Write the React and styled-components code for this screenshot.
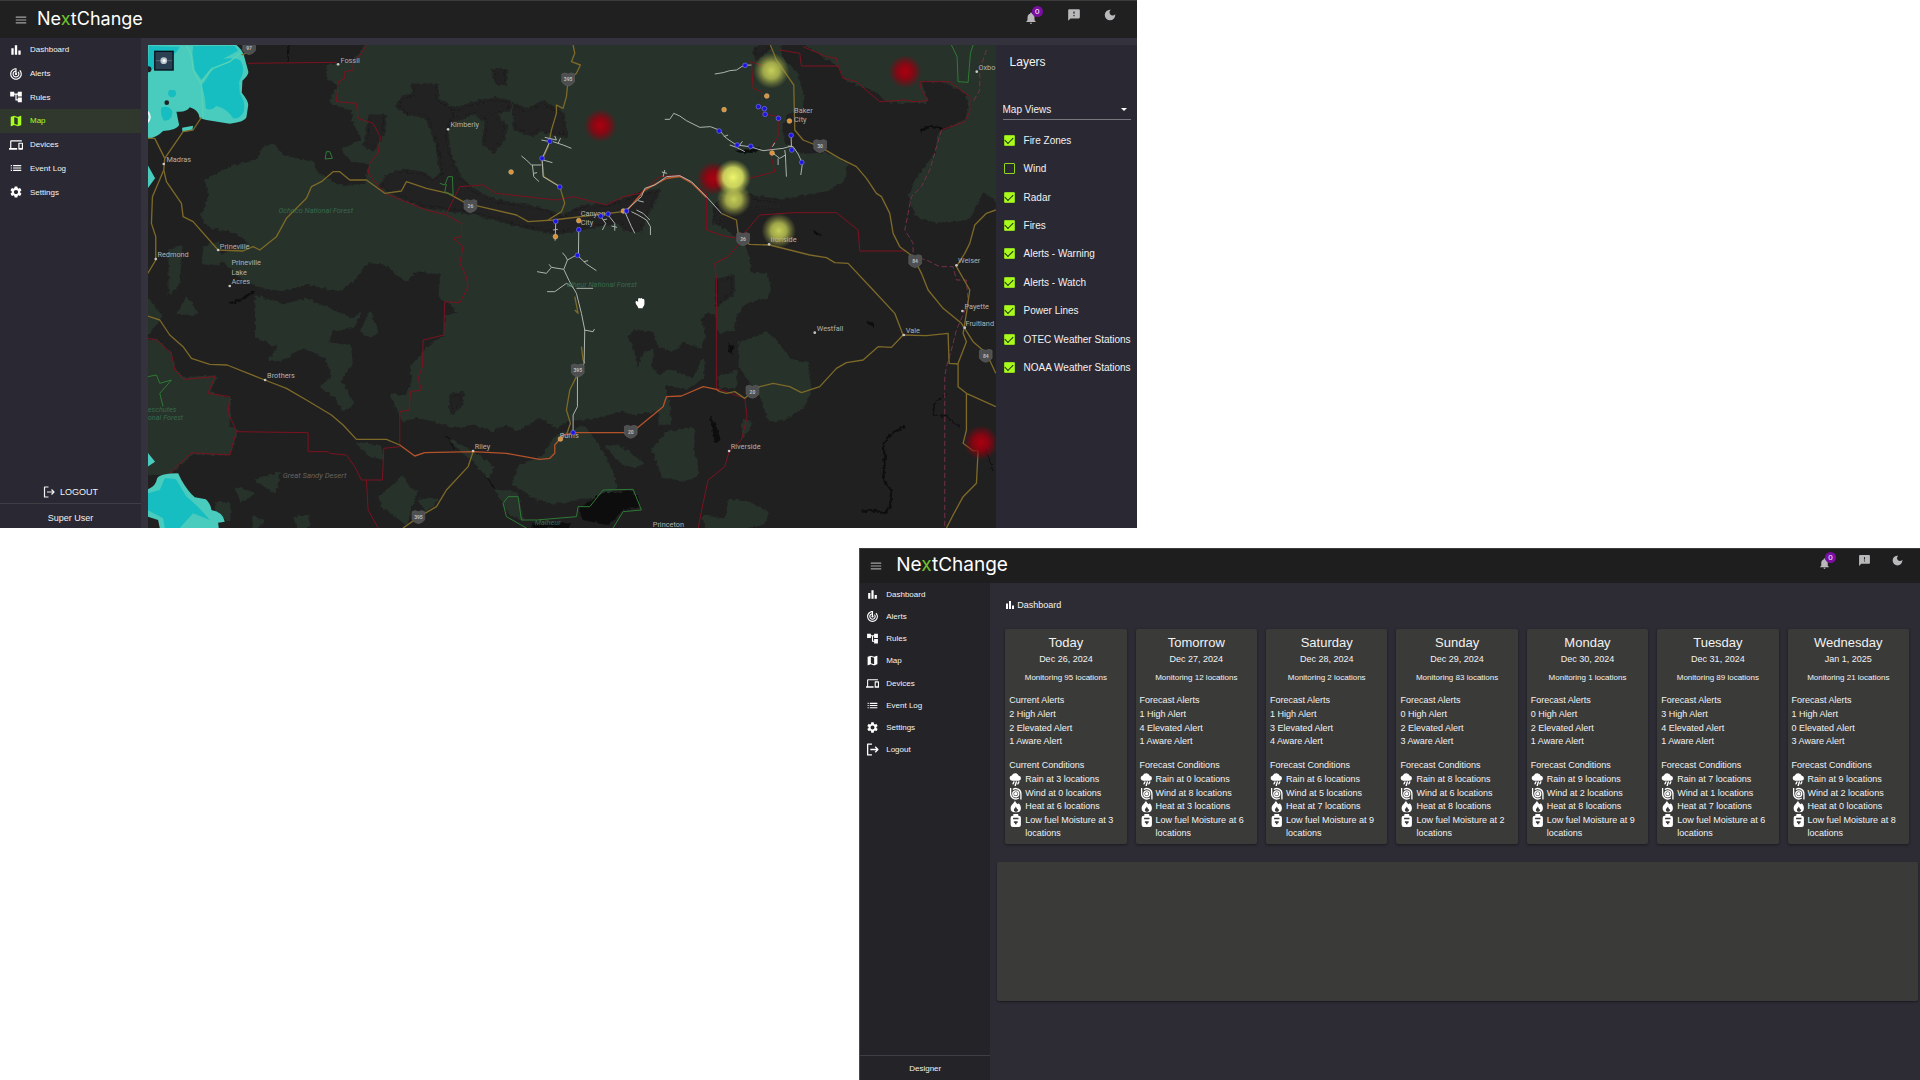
import React, { useState } from "react";
import styled, { createGlobalStyle } from "styled-components";
import {
  MdMenu, MdBarChart, MdTrackChanges, MdAccountTree, MdMap, MdDevices, MdList,
  MdSettings, MdNotifications, MdFeedback, MdDarkMode,
} from "react-icons/md";

const GlobalStyle = createGlobalStyle`
  * { box-sizing: border-box; }
  body {
    margin: 0;
    background: #fff;
    font-family: "Liberation Sans", Arial, Helvetica, sans-serif;
    color: #f2f2f2;
  }
  button, select, input { font: inherit; color: inherit; }
  ul, ol { list-style: none; margin: 0; padding: 0; }
  h2, h3, p { margin: 0; font-weight: 400; }
`;

/* ---------- shared shell ---------- */

const Showcase = styled.div`
  display: grid;
  grid-template-rows: 528fr 532fr;
  gap: 20px;
  min-height: 100vh;
`;

const Window = styled.section`
  display: flex;
  flex-direction: column;
  width: ${(p) => p.$width};
  justify-self: ${(p) => p.$side};
  background: ${(p) => p.$bg};
  border-top: 1px solid #3b3b3b;
  border-left: ${(p) => (p.$outlined ? "1px solid #4a4a4c" : "0")};
  min-height: 0;
`;

const Header = styled.header`
  display: flex;
  align-items: center;
  gap: ${(p) => p.$gap}px;
  height: ${(p) => p.$height}px;
  padding: 0 ${(p) => p.$right}px 0 ${(p) => p.$left}px;
  background: ${(p) => p.$bg};
`;

const IconButton = styled.button`
  position: relative;
  display: flex;
  padding: ${(p) => (p.$badged ? "5px 7px 0 0" : "0")};
  border: 0;
  background: none;
  color: ${(p) => p.$color || "#b9b9bb"};
  font-size: ${(p) => p.$size}px;
  cursor: pointer;
`;

const Badge = styled.span`
  position: absolute;
  top: 0;
  right: 2px;
  width: 11px;
  height: 11px;
  border-radius: 50%;
  background: #7b0fa3;
  color: #fff;
  font-size: 8px;
  line-height: 11px;
  text-align: center;
`;

const Logo = styled.span`
  flex: 1;
  padding-bottom: 2px;
  font-family: Inter, "Open Sans", sans-serif;
  font-size: ${(p) => p.$size}px;
  line-height: 24px;
  color: #fff;
  em { font-style: normal; color: #6fc22c; }
`;

const Actions = styled.div`
  display: flex;
  align-items: flex-start;
  align-self: flex-start;
  gap: ${(p) => p.$gap}px;
  padding-top: ${(p) => p.$top}px;
  > button + button { padding-top: 2px; }
`;

const Body = styled.div`
  flex: 1;
  display: flex;
  min-height: 0;
`;

const Sidebar = styled.aside`
  display: flex;
  flex-direction: column;
  flex: 0 0 ${(p) => p.$width}px;
  background: ${(p) => p.$bg};
`;

const NavList = styled.ul`
  display: grid;
  grid-auto-rows: 1fr;
  height: ${(p) => p.$height}px;
  margin-bottom: auto;
`;

const NavLink = styled.a`
  display: flex;
  align-items: center;
  gap: 7px;
  height: 100%;
  padding-left: ${(p) => p.$pad}px;
  background: ${(p) => (p.$active ? "#30382e" : "transparent")};
  color: ${(p) => (p.$active ? "#a6ff1f" : "#f4f4f4")};
  font-size: 8px;
  text-decoration: none;
  svg { width: ${(p) => p.$icon}px; height: ${(p) => p.$icon}px; color: ${(p) => (p.$active ? "#a6ff1f" : "#fff")}; }
`;

const LogoutButton = styled.button`
  display: flex;
  align-items: center;
  justify-content: center;
  gap: 5px;
  height: 23px;
  padding: 0;
  border: 0;
  background: none;
  font-size: 9px;
  cursor: pointer;
  svg { width: 12px; height: 12px; }
`;

const UserName = styled.p`
  height: ${(p) => p.$height}px;
  border-top: 1px solid #3f3e47;
  font-size: ${(p) => p.$size}px;
  line-height: ${(p) => p.$line}px;
  text-align: center;
`;

const LogoutIcon = () => (
  <svg viewBox="0 0 24 24" fill="none" stroke="currentColor" strokeWidth="2.4" strokeLinejoin="round" aria-hidden="true">
    <path d="M11 2H3v20h8M8 12h14M17 7l5 5-5 5" />
  </svg>
);

const navItems = [
  ["Dashboard", MdBarChart],
  ["Alerts", MdTrackChanges],
  ["Rules", MdAccountTree],
  ["Map", MdMap],
  ["Devices", MdDevices],
  ["Event Log", MdList],
  ["Settings", MdSettings],
];

function Nav({ items, active, height, pad, icon }) {
  return (
    <NavList $height={height}>
      {items.map(([label, Icon]) => (
        <li key={label}>
          <NavLink href="#" $active={label === active} $pad={pad} $icon={icon}>
            <Icon aria-hidden="true" />
            {label}
          </NavLink>
        </li>
      ))}
    </NavList>
  );
}

function TopBar({ bg, height, left, right, gap, actionGap, actionTop, size, logo }) {
  return (
    <Header $bg={bg} $height={height} $left={left} $right={right} $gap={gap}>
      <IconButton $size={14} $color="#a2a2a4" aria-label="Menu"><MdMenu /></IconButton>
      <Logo $size={logo}>Ne<em>x</em>tChange</Logo>
      <Actions $gap={actionGap} $top={actionTop}>
        <IconButton $size={size} $badged aria-label="Notifications"><MdNotifications /><Badge>0</Badge></IconButton>
        <IconButton $size={size} aria-label="Feedback"><MdFeedback /></IconButton>
        <IconButton $size={size} aria-label="Dark mode"><MdDarkMode /></IconButton>
      </Actions>
    </Header>
  );
}

/* ---------- map ---------- */

const MapArea = styled.main`
  flex: 1;
  display: flex;
  min-width: 0;
  padding: 7px 0 0 7px;
  background: #33323d;
`;

const MapCanvas = styled.svg`
  flex: 1;
  min-width: 0;
  width: 100%;
  height: 100%;
  background: #202020;
  font-family: Roboto, sans-serif;
`;

const FOREST = [
  "M680,45 L1920,45 1925,90 1970,130 1990,200 1985,235 1940,250 1925,290 1930,340 1985,375 2060,372 2120,400 2110,450 2060,480 1980,495 1920,505 1840,490 1780,475 1740,500 1715,530 1715,580 1760,605 1810,640 1830,700 1825,730 1880,735 1890,780 1880,800 1820,815 1790,850 1780,900 1740,905 1730,850 1700,845 1680,870 1695,920 1680,950 1630,930 1600,960 1560,950 1540,900 1480,895 1460,920 1480,960 1490,1030 1512,975 1540,960 1530,1010 1560,1040 1590,1020 1660,1050 1690,990 1690,1040 1640,1075 1570,1060 1585,1110 1590,1180 1560,1180 1560,1140 1480,1150 1440,1140 1380,1160 1280,1170 1250,1190 1200,1160 1130,1200 1100,1180 1060,1200 1000,1180 940,1190 880,1170 830,1160 790,1170 755,1095 800,1100 820,1050 815,1010 870,950 915,920 920,860 960,850 930,820 900,800 905,730 870,725 830,720 800,750 780,740 740,700 680,695 640,750 600,780 500,760 430,780 360,770 300,740 260,700 240,680 330,640 290,605 210,590 185,560 210,500 200,450 280,410 350,395 370,355 400,345 430,380 520,400 530,430 600,470 680,465 690,400 640,390 610,360 670,330 640,270 640,240 570,215 600,165 565,145 565,105 640,100Z",
  "M350,800 L430,825 500,810 560,835 640,870 660,850 640,890 580,900 560,940 630,950 635,1000 600,1050 640,1120 610,1140 590,1100 545,1070 580,1040 560,980 490,950 420,990 390,990 420,950 350,920Z",
  "M690,850 L715,905 690,915 665,905Z M140,805 L172,850 115,850Z M24,810 L65,860 24,910Z",
  "M24,930 L50,930 90,970 105,1020 130,1045 230,1040 205,1085 270,1110 265,1190 290,1200 270,1270 155,1270 90,1330 24,1330Z",
  "M90,660 L125,650 115,760 90,790Z M195,650 L235,640 240,700 190,700Z M450,450 L520,440 480,470Z",
  "M350,1350 L418,1330 405,1385Z M290,1375 L340,1390 305,1412Z M720,1400 L760,1370 790,1340 805,1375 830,1385 810,1440 800,1480 730,1430Z M230,1420 L268,1420 268,1470 230,1450Z M465,1465 L505,1460 505,1490 475,1490Z M340,1460 L370,1475 345,1494Z M655,1240 L720,1250 730,1285 690,1275Z M840,1410 L890,1410 860,1440Z",
  "M1800,940 L1840,925 1880,910 1905,930 1950,990 2000,1000 2012,1080 1990,1130 1930,1170 1890,1170 1860,1090 1800,1010Z",
  "M1580,1210 L1660,1195 1660,1260 1675,1330 1640,1350 1570,1340 1540,1260Z M1400,1250 L1440,1250 1508,1300 1490,1310 1450,1300Z M1740,1040 L1790,1025 1785,1070 1740,1070Z M1810,1170 L1835,1180 1810,1220Z",
  "M1770,1410 L1830,1420 1885,1450 1870,1480 1800,1494 1700,1494 1690,1460 1760,1470Z",
  "M1250,1220 L1330,1190 1370,1240 1400,1290 1430,1370 1390,1400 1350,1400 1240,1420 1180,1400 1120,1360 1140,1310 1210,1280Z M930,1230 L1000,1270 1060,1310 1045,1340 1000,1290Z M1070,1380 L1130,1390 1150,1470 1110,1450Z",
  "M2000,45 L2568,45 2568,510 2530,480 2490,560 2460,570 2390,575 2330,555 2310,500 2330,450 2390,370 2400,310 2480,270 2490,230 2480,190 2420,155 2340,150 2360,215 2240,215 2210,180 2120,150 2100,110 2070,90Z",
];

const CLEARINGS = [
  "M770,230 L790,200 820,195 820,165 890,165 895,210 940,235 945,265 920,300 930,370 960,440 1000,480 1060,510 1200,535 1270,560 1320,530 1400,525 1450,510 1500,490 1560,480 1520,560 1500,605 1455,600 1440,575 1250,610 1150,590 1000,550 850,530 760,490 720,470 740,440 790,420 850,430 880,450 905,430 890,340 860,260 800,250Z",
  "M940,240 L1000,220 1060,205 1110,215 1110,240 1060,250 1100,290 1090,330 1060,365 1030,340 1040,270 1000,250 950,270Z",
  "M1120,220 L1160,240 1210,215 1270,250 1280,320 1200,300 1180,315 1125,300Z",
  "M1060,120 L1098,120 1098,165 1070,160Z M690,258 L735,258 735,300 700,360 675,345Z",
  "M1850,90 L1842,60 1860,48 1895,50 1870,70Z M1720,580 L1800,540 1920,530 1890,510 1800,500 1740,520Z",
  "M935,1095 L968,1090 965,1120 940,1150 930,1130Z M1730,750 L1780,740 1780,790 1730,830Z",
];

const ROADS = [
  "M24,325 L45,325 75,385 72,420 80,455 125,520 130,560 160,575 235,660 310,663 340,650 360,660 410,620 440,565 500,505 515,470 545,455 580,425 600,425 630,450 680,450 735,490 785,483 800,455 860,475 925,490 980,520 1130,555 1165,575 1240,570 1450,545",
  "M185,262 L160,300 130,305 75,385 M72,420 L38,500 35,580 48,620 48,690 24,730 M330,65 L305,75",
  "M1300,45 L1305,70 1295,95 1322,105 1310,130 1285,150 1280,200 1270,235 1250,225 1250,250 1235,300 1225,350 1207,390 1212,440 1260,470 1275,520 1265,545 1225,570",
  "M1892,45 L1910,90 1962,165 1965,300 1990,330 2040,350 2100,385 2150,410 2180,445 2210,490 2225,500 2250,550 2260,610 2280,650 2320,680 2345,730 2365,780 2410,835 2465,880 2500,935 2540,970 2568,1030",
  "M1745,550 L1790,570 1797,625 1830,643 1890,645 2010,675 2060,683 2085,698 2125,700 2200,780 2265,850 2290,915 2255,952 2215,950 2170,990 2120,998 2090,1015 2040,1070 1985,1088 1950,1070 1900,1060 1860,1070 1838,1085 1815,1105 1785,1085 1760,1090 1740,1085",
  "M2568,540 L2540,550 2505,585 2490,640 2475,670 2450,710 2490,780 2480,850 2470,910 2480,935 2455,1000 2455,1070 2480,1090 2568,1130 M2290,915 L2360,917 2425,910 2428,1000 2455,1002 M2480,1090 L2480,1200 2470,1240 2500,1262 2515,1262 2510,1360 2470,1400 2440,1455 2420,1494",
  "M24,858 L60,870 90,915 130,950 155,985 210,1003 262,1005 375,1050 440,1075 500,1110 575,1155 610,1185 650,1228 740,1228 780,1245",
  "M1000,1265 L985,1310 920,1380 890,1430 835,1462 790,1494 M1310,1040 L1290,1080 1280,1140 1292,1180 1280,1215 M1305,800 L1315,850 1305,840 M1325,950 L1330,990 1335,1000",
];

const HIGHWAYS = "M780,1245 L825,1278 855,1268 1000,1265 1100,1270 1200,1288 1230,1285 1245,1270 1245,1245 1270,1215 1310,1208 1475,1208 1570,1130 1580,1100 1625,1098 1690,1070 1730,1078 1740,1085";

const BORDERS = [
  "M680,45 L665,70 640,100 640,120 615,125 615,145 595,155 590,215 650,220 655,265 700,280 722,320 715,370 690,400 685,430 735,490 860,540 920,555 965,580 965,620 940,625 970,650 960,700 980,740 985,770 960,818 915,815 912,915 850,930 848,1010 835,1045 845,1080 812,1085 808,1140 780,1145 780,1250 732,1255 728,1350 665,1350 645,1310 620,1275 570,1270 565,1265 505,1265 505,1208 290,1205",
  "M325,100 L590,97 M24,925 L50,930 95,970 105,1020 135,1048 225,1040 205,1090 270,1100 265,1150 280,1180 290,1205 270,1275 155,1268 90,1330 M680,1350 L685,1440 715,1494",
  "M920,550 L960,470 1030,465 1070,490 1250,510 1300,500 1400,525 1450,500 1500,490 1560,440 1620,435 1700,490 1700,560 1700,600 1760,620 1800,625 1860,555 1960,548 2090,548 2155,600 2160,663 2300,663",
  "M1800,640 L1765,680 1725,700 1730,750 1730,1075 1815,1105 1822,1160 1805,1230 1768,1265 1755,1310 1705,1350 1690,1420 1675,1494",
  "M1830,95 L1880,110 M1835,95 L1840,175 1865,185 1865,250 1915,260 1915,320 1890,360 1905,425 1830,445 M1920,60 L1980,70 1985,108 2095,108 2090,85 2060,80 1990,50 M2095,108 L2110,145 2150,155 2190,190 2220,215 2300,210 2320,215 2365,212 2345,180 2340,155 2430,155 2490,200 2490,245 2475,275 2405,300",
];

const RIVERS = "M2405,300 L2370,420 2345,470 2315,500 2295,600 2320,640 2320,680 2360,690 2400,710 2440,710 2450,750 2480,750 2485,820 2450,900 2435,960 2420,1010 2415,1040 2415,1494 M2540,60 L2520,120 2520,180 2500,215";

const GREEN_OUTLINES = "M560,365 L570,365 578,385 556,387Z M900,460 L915,465 925,440 938,440 940,495 915,485 920,462 M2435,45 L2452,80 2455,155 2485,157 2492,70 2500,45 M24,1040 L50,1035 60,1060 95,1050 60,1090 70,1130 M1090,1420 L1105,1400 1135,1400 1145,1470 1190,1470 1310,1460 1315,1430 1350,1430 1390,1380 1480,1378 1505,1440 1450,1445 1420,1494 M1090,1420 L1100,1460 1160,1494";

const POWER_LINES = "M1230,335 L1207,385 1210,440 1260,470 M1230,335 L1205,330 M1215,322 L1250,330 1245,318 M1240,335 L1270,345 1295,355 M1255,340 L1262,325 M1205,405 L1175,405 1160,390 1145,378 M1178,405 L1182,440 1198,455 M1182,430 L1192,428 M1210,390 L1238,398 M1248,575 L1246,632 M1240,600 L1254,598 M1317,600 L1316,672 1283,690 1272,718 1288,752 1310,790 1325,850 1335,900 1333,1000 1313,1035 1313,1130 1300,1155 1300,1205 M1272,718 L1235,712 1220,730 1192,725 M1235,712 L1228,703 M1283,690 L1278,680 1268,668 M1314,677 L1340,702 1370,722 M1332,695 L1345,692 M1300,772 L1280,760 1245,785 1222,785 M1310,775 L1360,775 M1333,900 L1360,905 1364,897 M1383,560 L1398,580 1388,600 M1390,570 L1402,567 M1405,555 L1425,580 1425,602 M1415,588 L1432,592 M1455,545 L1475,590 1485,610 M1460,540 L1505,500 1515,475 1545,465 1580,440 1620,437 1655,455 1700,500 1745,550 M1495,512 L1512,516 M1570,440 L1575,420 M1566,426 L1582,430 M1475,545 L1495,555 1520,570 1532,590 1532,615 M1490,540 L1510,550 1530,570 M1725,132 L1750,128 1770,122 1790,120 1812,106 1835,105 M1575,268 L1590,268 1602,250 1620,258 1640,272 1680,292 1712,290 1738,300 1760,325 1790,345 1830,350 1870,362 1930,355 1955,348 1954,318 M1770,345 L1790,352 1815,365 M1752,320 L1765,315 M1800,345 L1808,334 M1945,348 L1960,350 1975,372 1988,400 1983,435 M1900,370 L1920,385 1937,375 1935,360 M1937,375 L1938,400 1940,440 M1915,385 L1915,405 M1898,350 L1905,338";

const BLUE = [[1230,334],[1207,385],[1260,471],[1248,574],[1317,599],[1313,676],[1383,558],[1405,552],[1460,543],[1816,106],[1856,230],[1874,236],[1876,253],[1916,265],[1738,303],[1792,345],[1833,349],[1954,316],[1956,360],[1986,397],[1300,1208]];
const ORANGE = [[1114,426],[1247,620],[1317,572],[1451,543],[1753,239],[1881,198],[1949,273],[1897,369],[1262,1227]];
const HEAT = [["r",1382,287,50],["r",2296,125,50],["r",1720,445,50],["w",1782,508,52],["w",1895,122,54],["y",1780,442,54],["w",1917,602,52],["r",2524,1238,52]];
const HEAT_FILL = { r: "url(#heatRed)", y: "url(#heatBright)", w: "url(#heatYellow)" };
const SHIELDS = [[328,54,"97"],[1285,148,"395"],[992,528,"26"],[1810,627,"26"],[2041,348,"30"],[2326,693,"84"],[1314,1021,"395"],[1473,1205,"20"],[1838,1085,"20"],[836,1461,"395"],[2538,977,"84"]];
const PLACES = [
  [602,98,"Fossil",595,103],[932,292,"Kimberly",925,298],[80,395,"Madras",72,402],[240,656,"Prineville",235,660],[53,681,"Redmond",48,687],
  [275,706,"Prineville"],[275,734,"Lake"],[275,762,"Acres",270,768],[1323,558,"Canyon"],[1323,586,"City"],[1963,248,"Baker"],[1963,276,"City"],
  [2516,119,"Oxbo",2511,125],[1892,637,"Ironside",1888,643],[2455,700,"Weiser",2450,706],[382,1044,"Brothers",376,1050],[1005,1257,"Riley",1000,1263],
  [1260,1223,"Burns"],[2031,902,"Westfall",2025,908],[2298,909,"Vale",2292,915],[2474,837,"Payette",2468,843],[2477,888,"Fruitland",2475,893],
  [1773,1257,"Riverside",1768,1263],[1539,1490,"Princeton"],
];
const REGIONS = [[416,550,"Ochoco National Forest"],[1282,770,"alheur National Forest"],[24,1147,"eschutes"],[24,1169,"onal Forest"],[1185,1485,"Malheur"]];

function RegionMap() {
  return (
    <MapCanvas viewBox="24 45 2544 1449" preserveAspectRatio="xMidYMid slice" role="img" aria-label="Map">
      <defs>
        <radialGradient id="heatRed"><stop offset="0" stopColor="#ac0010" /><stop offset=".45" stopColor="#98000f" stopOpacity=".85" /><stop offset="1" stopColor="#90000f" stopOpacity="0" /></radialGradient>
        <radialGradient id="heatBright"><stop offset="0" stopColor="#eef56c" /><stop offset=".55" stopColor="#dfe763" stopOpacity=".85" /><stop offset="1" stopColor="#a5ad45" stopOpacity="0" /></radialGradient>
        <radialGradient id="heatYellow"><stop offset="0" stopColor="#c6cf58" /><stop offset=".45" stopColor="#b5bd50" stopOpacity=".85" /><stop offset="1" stopColor="#8f973f" stopOpacity="0" /></radialGradient>
        <filter id="coast" x="-5%" y="-5%" width="110%" height="110%">
          <feTurbulence type="fractalNoise" baseFrequency="0.08" numOctaves="2" seed="7" />
          <feDisplacementMap in="SourceGraphic" scale="14" xChannelSelector="R" yChannelSelector="G" />
        </filter>
      </defs>
      <g filter="url(#coast)">
        <g fill="#27312b" stroke="#27312b" strokeWidth="8" strokeLinejoin="round">{FOREST.map((d) => <path key={d} d={d} />)}</g>
        <g fill="#202020" stroke="#202020" strokeWidth="8" strokeLinejoin="round">{CLEARINGS.map((d) => <path key={d} d={d} />)}</g>
        <g fill="#0b0c0e">
          <path d="M1315,1435 L1340,1420 1380,1395 1400,1385 1430,1390 1470,1380 1495,1400 1498,1430 1450,1440 1430,1465 1400,1485 1330,1470Z" />
          <path d="M1710,1155 L1730,1185 1742,1230 1725,1238 1718,1200Z M1765,942 L1783,945 1775,972 1766,965Z M1785,362 L1860,355 1850,368 1800,368Z M1180,1480 L1290,1480 1290,1494 1175,1494Z" />
        </g>
        <g fill="none" stroke="#0b0c0e" strokeWidth="6" strokeLinejoin="round">
          <path d="M2298,1188 L2255,1210 2232,1240 2235,1300 2230,1350 2255,1380 2250,1430 2235,1450 2195,1440 2165,1445 M2180,875 L2205,888 M2340,303 L2375,288 2410,298 M270,820 L300,810 345,785 M2020,605 L2045,618" />
          <path strokeWidth="3" d="M2420,1090 L2385,1120 2380,1155 2420,1160 2460,1190 M2530,1240 L2560,1320 M448,45 L444,95 M920,1215 L945,1260 M1040,1340 L1065,1375" />
        </g>
      </g>
      <g>
        <path fill="#49cbbd" d="M24,45 L290,45 Q306,58 312,75 L325,122 Q330,132 308,152 L306,188 Q328,215 325,228 L320,262 Q316,276 270,281 L200,270 180,265 Q178,240 150,232 Q140,248 110,245 L118,285 Q112,300 70,303 Q52,322 24,327Z M127,293 L160,287 158,300 128,307Z M24,405 L46,445 24,475Z M24,1268 L46,1295 24,1310Z M24,1378 Q48,1370 52,1345 Q62,1330 115,1330 L125,1350 Q145,1385 165,1402 L198,1408 Q212,1420 215,1440 Q250,1446 255,1475 L235,1478 237,1494 60,1494 55,1470 24,1460Z" />
        <path fill="#16bec1" d="M28,48 L120,50 Q110,75 85,78 Q80,105 60,112 L24,122Z M225,90 Q290,78 302,92 Q320,120 298,155 L300,190 Q318,215 312,245 Q300,268 280,265 Q262,235 230,228 Q212,245 198,235 Q196,195 185,165 Q205,150 225,90Z M160,48 L285,48 295,62 225,100 185,150 165,120 158,72Z M65,232 Q90,225 98,245 Q98,272 72,272 Q60,255 65,232Z M90,180 a12,12 0 1 0 14,0Z M75,1345 Q108,1345 110,1350 L140,1400 Q170,1422 210,1470 L160,1450 120,1494 75,1494 70,1465 24,1440 24,1390 60,1380Z" />
        <path fill="none" stroke="#58d3b5" strokeWidth="4" d="M140,48 L155,75 160,120 185,165 190,262 M180,160 L220,115 270,95 300,70" />
        <circle cx="81" cy="218" r="7" fill="#1d2022" /><circle cx="26" cy="118" r="9" fill="#1d2022" />
        <path fill="none" stroke="#f5f5f5" strokeWidth="6" d="M24,245 Q36,262 24,276" />
      </g>
      <g fill="none" strokeLinejoin="round">
        <g stroke="#7c1220" strokeWidth="3">{BORDERS.map((d) => <path key={d} d={d} />)}</g>
        <path d={RIVERS} stroke="#74304a" strokeWidth="3" strokeDasharray="16 8" />
        <g stroke="#7d6928" strokeWidth="4">{ROADS.map((d) => <path key={d} d={d} />)}</g>
        <path d={HIGHWAYS} stroke="#b4532a" strokeWidth="4" />
        <path d="M1460,543 L1515,480 1580,445 1620,439 1655,458 1700,502" stroke="#b4532a" strokeWidth="5" />
        <path d={GREEN_OUTLINES} stroke="#2f7a35" strokeWidth="3" />
        <path d={POWER_LINES} stroke="#aeb4ae" strokeWidth="3" />
      </g>
      {HEAT.map(([tone, x, y, r]) => <circle key={`${x}-${y}`} cx={x} cy={y} r={r} fill={HEAT_FILL[tone]} />)}
      <g fontSize="22" fontStyle="italic" fill="#37694f">
        {REGIONS.map(([x, y, t]) => <text key={t} x={x} y={y}>{t}</text>)}
        <text x="429" y="1345" fontSize="23" fill="#66635f">Great Sandy Desert</text>
      </g>
      <g fontSize="22" fill="#b0b2b1">
        {PLACES.map(([x, y, t, cx, cy]) => (
          <g key={`${t}-${y}`}>
            <text x={x} y={y}>{t}</text>
            {cx && <circle cx={cx} cy={cy} r="4" fill="#c8c8c8" />}
          </g>
        ))}
      </g>
      {SHIELDS.map(([x, y, t]) => (
        <g key={`${x}-${y}`}>
          <path d={`M${x - 19},${y - 16} L${x - 10},${y - 19} L${x},${y - 16} L${x + 10},${y - 19} L${x + 19},${y - 16} L${x + 19},${y + 8} Q${x + 12},${y + 18} ${x},${y + 20} Q${x - 12},${y + 18} ${x - 19},${y + 8}Z`} fill="#4e4f50" stroke="#5d5e5f" strokeWidth="2" />
          <text x={x} y={y + 6} fontSize="15" fontWeight="700" textAnchor="middle" fill="#bcbcbc">{t}</text>
        </g>
      ))}
      <g fill="#dc9233" stroke="#d3b58a" strokeWidth="2">{ORANGE.map(([x, y]) => <circle key={`${x}-${y}`} cx={x} cy={y} r="7" />)}</g>
      <g fill="#1c14e6" stroke="#7a7ae0" strokeWidth="2">{BLUE.map(([x, y]) => <circle key={`${x}-${y}`} cx={x} cy={y} r="7" />)}</g>
      <g>
        <rect x="45" y="64" width="55" height="56" fill="#2b3f52" stroke="#07101a" strokeWidth="4" />
        <path d="M48,92 H97" stroke="#69788a" strokeWidth="2" />
        <circle cx="72" cy="92" r="10" fill="#b9c3cc" /><circle cx="73" cy="92" r="5" fill="#f4f6f8" />
      </g>
      <path fill="#fff" d="M1487,815 q4,-5 8,1 l0,-10 q4,-4 6,0 q4,-4 7,1 q5,-2 6,4 l0,12 q-1,6 -5,9 l0,3 h-13 l-2,-5 q-7,-7 -7,-15Z" />
    </MapCanvas>
  );
}

/* ---------- layers panel ---------- */

const LayersPanel = styled.aside`
  flex: 0 0 141px;
  margin-top: 7px;
  padding: 9px 6px 0 7px;
  background: #2a2832;
`;

const PanelTitle = styled.h2`
  padding-left: 7px;
  font-size: 12px;
  line-height: 16px;
`;

const SelectField = styled.label`
  position: relative;
  display: block;
  margin: 30px 0 6px;
  &::after {
    content: "";
    position: absolute;
    right: 4px;
    top: 8px;
    border: 3px solid transparent;
    border-top-color: #fff;
  }
`;

const Select = styled.select`
  display: block;
  appearance: none;
  width: 100%;
  height: 20px;
  padding: 0;
  border: 0;
  border-bottom: 1px solid #77767d;
  border-radius: 0;
  background: none;
  font-size: 10px;
`;

const LayerList = styled.ul`
  display: grid;
  grid-auto-rows: 1fr;
  height: 256px;
`;

const LayerLabel = styled.label`
  display: flex;
  align-items: center;
  gap: 9px;
  height: 100%;
  padding-left: 1px;
  font-size: 10px;
  white-space: nowrap;
`;

const Check = styled.input`
  appearance: none;
  display: grid;
  place-items: center;
  width: 11px;
  height: 11px;
  margin: 0;
  border: 1px solid #8fd61c;
  border-radius: 1px;
  &:checked { background: #a9fb1c; }
  &:checked::before {
    content: "";
    width: 7px;
    height: 4px;
    border: solid #1d2a10;
    border-width: 0 0 1px 1px;
    transform: translateY(-1px) rotate(-45deg);
  }
`;

const layerNames = ["Fire Zones", "Wind", "Radar", "Fires", "Alerts - Warning", "Alerts - Watch", "Power Lines", "OTEC Weather Stations", "NOAA Weather Stations"];

function Layers() {
  const [off, setOff] = useState({ Wind: true });
  return (
    <LayersPanel>
      <PanelTitle>Layers</PanelTitle>
      <SelectField>
        <Select aria-label="Map Views" defaultValue="Map Views"><option>Map Views</option></Select>
      </SelectField>
      <LayerList>
        {layerNames.map((name) => (
          <li key={name}>
            <LayerLabel>
              <Check type="checkbox" checked={!off[name]} onChange={() => setOff({ ...off, [name]: !off[name] })} />
              {name}
            </LayerLabel>
          </li>
        ))}
      </LayerList>
    </LayersPanel>
  );
}

/* ---------- dashboard ---------- */

const Dashboard = styled.main`
  flex: 1;
  min-width: 0;
  padding: 0 2px 0 7px;
  background: #2d2c35;
`;

const Breadcrumb = styled.div`
  display: flex;
  align-items: center;
  gap: 1px;
  height: 46px;
  padding: 0 7px 2px;
  font-size: 9px;
  svg { width: 12px; height: 12px; color: #fff; }
`;

const CardGrid = styled.div`
  display: grid;
  grid-template-columns: repeat(7, 1fr);
  gap: 9px;
  padding: 0 9px 0 8px;
`;

const DayCard = styled.article`
  padding: 5px 4px 4px;
  border-radius: 2px;
  background: #3a3a39;
  box-shadow: 0 1px 3px rgba(0, 0, 0, 0.45);
  font-size: 9px;
  line-height: 13px;
`;

const DayName = styled.h2`
  margin-bottom: 1px;
  font-size: 13px;
  line-height: 18px;
  text-align: center;
`;

const CardDate = styled.p`
  text-align: center;
`;

const Monitoring = styled.p`
  margin: 5px 0 10px;
  font-size: 8px;
  text-align: center;
`;

const SectionLabel = styled.h3`
  font-size: 9px;
  line-height: 13px;
`;

const AlertList = styled.ul`
  display: grid;
  grid-auto-rows: 1fr;
  height: 41px;
  margin: 1px 0 10px;
`;

const ConditionList = styled.ul`
  display: grid;
  align-content: space-between;
  height: 67px;
  margin-top: 1px;
`;

const Condition = styled.li`
  display: flex;
  gap: 3px;
  svg { flex: none; width: 13px; height: 13px; color: #fff; }
`;

const EmptyPanel = styled.section`
  height: 139px;
  margin-top: 18px;
  border-radius: 2px;
  background: #3a3a39;
  box-shadow: 0 1px 2px rgba(0, 0, 0, 0.45);
`;

const RainIcon = () => (
  <svg viewBox="0 0 24 24" fill="currentColor" aria-hidden="true">
    <path d="M6 14.500a5 5 0 0 1-.800-9.900A7 7 0 0 1 18 5a4.800 4.800 0 0 1 0 9.500Z" />
    <path d="M9 16.500 L7.500 20M13.500 16.500 L11.500 23M18 16.500 L16.500 20" stroke="currentColor" strokeWidth="2.600" strokeLinecap="round" />
  </svg>
);

const WindIcon = () => (
  <svg viewBox="0 0 24 24" fill="none" stroke="currentColor" strokeWidth="2.400" aria-hidden="true">
    <circle cx="12.500" cy="12.500" r="2" fill="currentColor" />
    <circle cx="12.500" cy="12.500" r="5.500" />
    <path d="M3 2v10.500a9.500 9.500 0 0 0 15 7.800M22 23V12.500A9.500 9.500 0 0 0 7 4.700" />
  </svg>
);

const HeatIcon = () => (
  <svg viewBox="0 0 24 24" fill="currentColor" fillRule="evenodd" aria-hidden="true">
    <path d="M11 1c1 4 3 5 5 7l2-2c2.500 2.500 4 5.500 4 9a7.500 7.500 0 0 1-7.500 7.500h-4A7.500 7.500 0 0 1 3 15C3 9 9 7 11 1ZM12.500 12c-.500 2.500-3.500 3.500-3.500 6.500 0 1.500 1 2.500 2 3h3.500c1.500-.700 2.500-2 2.500-3.500l-2-1.500Z" />
  </svg>
);

const MoistureIcon = () => (
  <svg viewBox="0 0 24 24" fill="currentColor" fillRule="evenodd" aria-hidden="true">
    <path d="M8 0h9v3h1a4 4 0 0 1 4 4v13a4 4 0 0 1-4 4H7a4 4 0 0 1-4-4V7a4 4 0 0 1 4-4h1ZM7.500 7v2.500h10V7ZM9 13.500h7v2.500l-2 .500v2.500h-3v-2.500l-2-.500Z" />
  </svg>
);

const days = [
  ["Today", "Dec 26, 2024", 95, [2, 2, 1], [3, 0, 6, 3]],
  ["Tomorrow", "Dec 27, 2024", 12, [1, 4, 1], [0, 8, 3, 6]],
  ["Saturday", "Dec 28, 2024", 2, [1, 3, 4], [6, 5, 7, 9]],
  ["Sunday", "Dec 29, 2024", 83, [0, 2, 3], [8, 6, 8, 2]],
  ["Monday", "Dec 30, 2024", 1, [0, 2, 1], [9, 2, 8, 9]],
  ["Tuesday", "Dec 31, 2024", 89, [3, 4, 1], [7, 1, 7, 6]],
  ["Wednesday", "Jan 1, 2025", 21, [1, 0, 3], [9, 2, 0, 8]],
];
const alertLevels = ["High", "Elevated", "Aware"];
const conditions = [["Rain", RainIcon], ["Wind", WindIcon], ["Heat", HeatIcon], ["Low fuel Moisture", MoistureIcon]];

function Day({ name, date, monitored, alerts, counts }) {
  const prefix = name === "Today" ? "Current" : "Forecast";
  return (
    <DayCard>
      <DayName>{name}</DayName>
      <CardDate>{date}</CardDate>
      <Monitoring>{`Monitoring ${monitored} locations`}</Monitoring>
      <SectionLabel>{`${prefix} Alerts`}</SectionLabel>
      <AlertList>
        {alertLevels.map((level, i) => <li key={level}>{`${alerts[i]} ${level} Alert`}</li>)}
      </AlertList>
      <SectionLabel>{`${prefix} Conditions`}</SectionLabel>
      <ConditionList>
        {conditions.map(([label, Icon], i) => (
          <Condition key={label}><Icon /><span>{`${label} at ${counts[i]} locations`}</span></Condition>
        ))}
      </ConditionList>
    </DayCard>
  );
}

export default function App() {
  return (
    <>
      <GlobalStyle />
      <Showcase>
        <Window $width="59.2%" $side="start" $bg="#33323d">
          <TopBar bg="#202020" height={37} left={14} right={20} gap={9} actionGap={22} actionTop={5} size={14} logo={18} />
          <Body>
            <Sidebar $width={141} $bg="#2a2832">
              <Nav items={navItems} active="Map" height={166} pad={9} icon={14} />
              <LogoutButton><LogoutIcon />LOGOUT</LogoutButton>
              <UserName $height={25} $size={9} $line={28}>Super User</UserName>
            </Sidebar>
            <MapArea><RegionMap /></MapArea>
            <Layers />
          </Body>
        </Window>
        <Window $width="55.25%" $side="end" $bg="#2d2c35" $outlined>
          <TopBar bg="#1e1e1e" height={34} left={9} right={16} gap={13} actionGap={20} actionTop={3} size={13} logo={19} />
          <Body>
            <Sidebar $width={130} $bg="#242328">
              <Nav items={[...navItems, ["Logout", LogoutIcon]]} height={178} pad={6} icon={13} />
              <UserName $height={25} $size={8} $line={26}>Designer</UserName>
            </Sidebar>
            <Dashboard>
              <Breadcrumb><MdBarChart aria-hidden="true" />Dashboard</Breadcrumb>
              <CardGrid>
                {days.map(([name, date, monitored, alerts, counts]) => (
                  <Day key={name} name={name} date={date} monitored={monitored} alerts={alerts} counts={counts} />
                ))}
              </CardGrid>
              <EmptyPanel />
            </Dashboard>
          </Body>
        </Window>
      </Showcase>
    </>
  );
}
